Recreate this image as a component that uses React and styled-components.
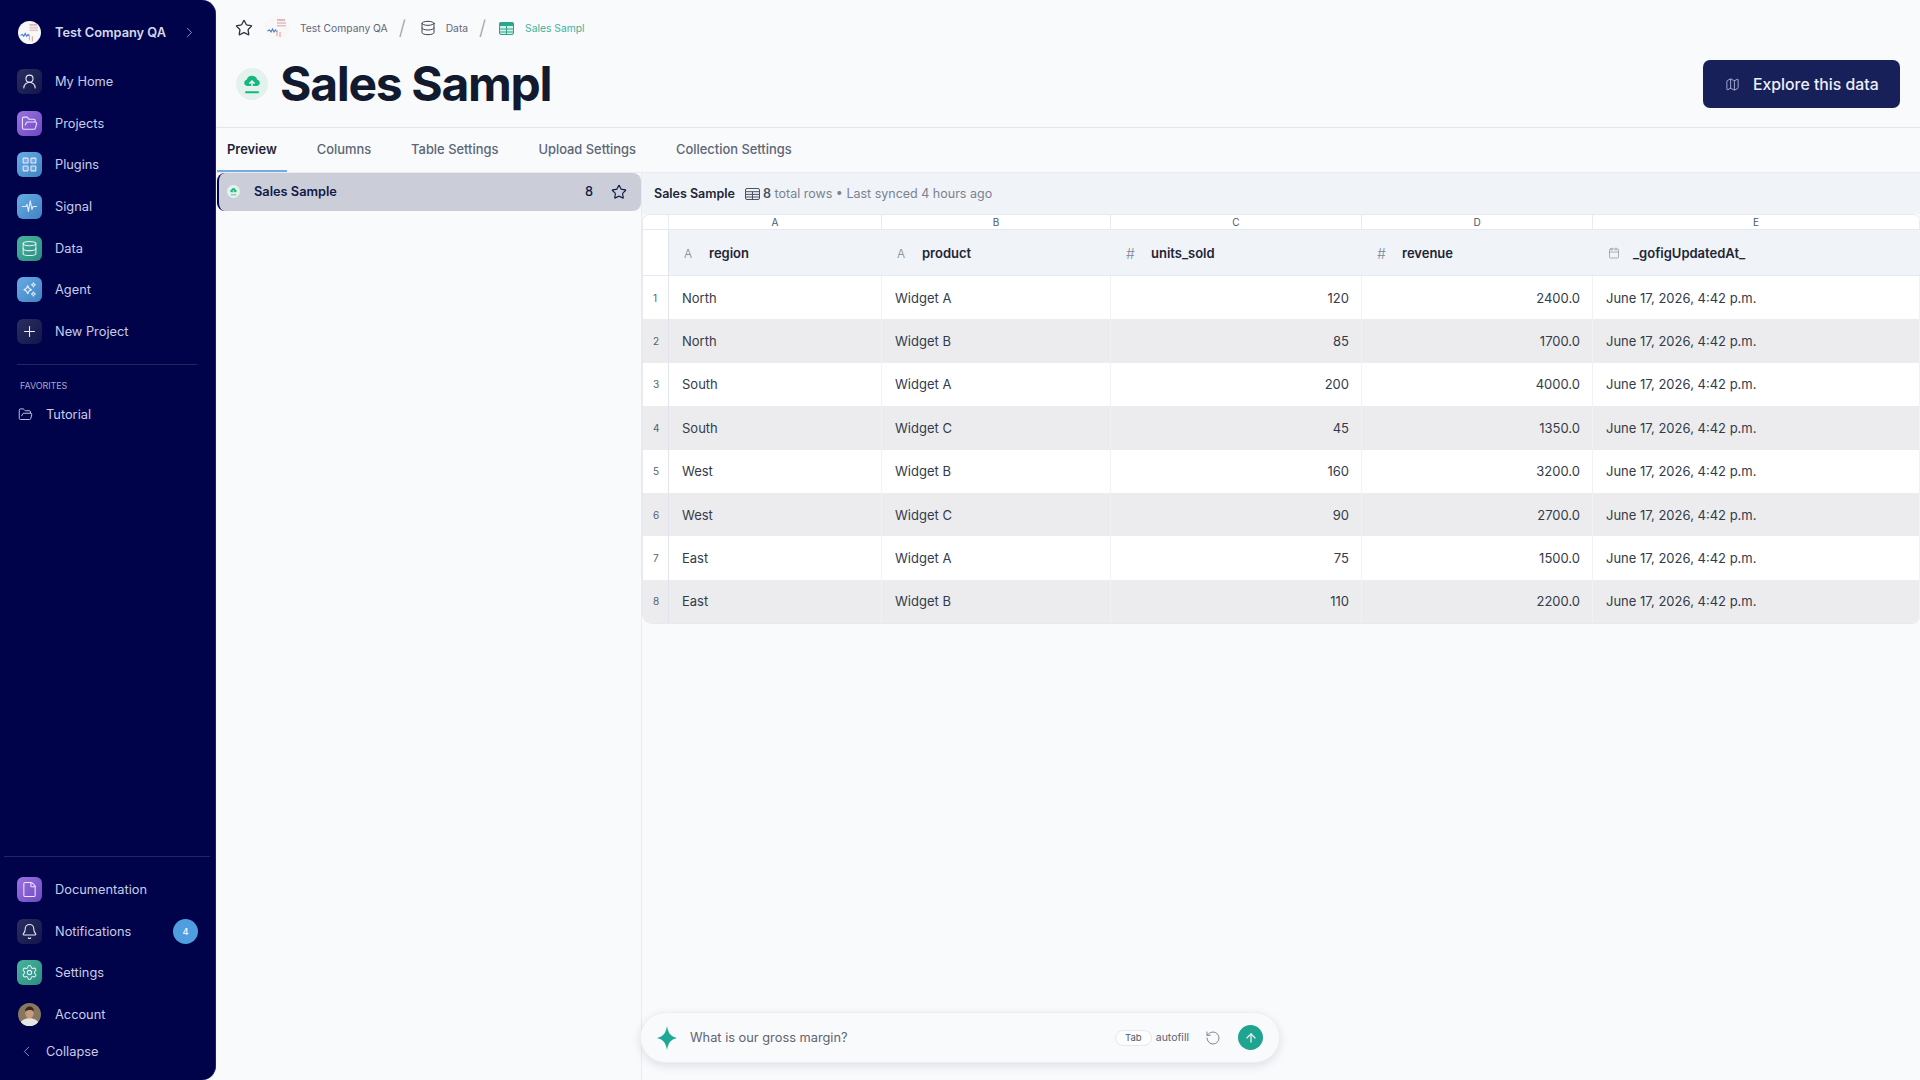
import styled, { createGlobalStyle } from "styled-components";
import {
  ArrowUp,
  Bell,
  Calendar,
  ChevronLeft,
  ChevronRight,
  Database,
  File,
  FolderOpen,
  LayoutGrid,
  Map,
  Plus,
  RotateCcw,
  Settings,
  Star,
  UserRound,
} from "lucide-react";

const GlobalStyle = createGlobalStyle`
  html, body {
    margin: 0;
    height: 100%;
    overflow: hidden;
    background: #f9fafc;
    font-family: Inter, "Noto Sans", sans-serif;
  }
  * { box-sizing: border-box; }
`;

const gradients = {
  dark: "linear-gradient(135deg, #2b2f5e, #12154a)",
  purple: "linear-gradient(135deg, #9a72e0, #6f48c2)",
  blue: "linear-gradient(135deg, #67ace4, #3f84c2)",
  green: "linear-gradient(135deg, #47b49b, #2b8d7f)",
};

const Page = styled.div`
  display: flex;
  width: 100%;
  height: 100vh;
  background: #f9fafc;
`;

/* sidebar */
const Sidebar = styled.aside`
  display: flex;
  flex-direction: column;
  flex: 0 0 216px;
  height: 100%;
  padding: 11px 0 12px;
  background: #01034a;
  border-right: 1px solid #1a2266;
  border-radius: 0 14px 14px 0;
  color: #c8cce8;
`;

const CompanyRow = styled.div`
  display: flex;
  align-items: center;
  height: 42px;
  margin-bottom: 8px;
  padding: 0 17px 0 18px;
  gap: 14px;
  font-size: 12.8px;
  font-weight: 600;
  color: #d5d8ee;
`;

const CompanyName = styled.span`
  flex: 1;
  white-space: nowrap;
`;

const NavItem = styled.div`
  display: flex;
  align-items: center;
  height: 41.6px;
  padding: 0 17px;
  gap: 13px;
  font-size: 12.8px;
`;

const NavLabel = styled.span`
  flex: 1;
`;

const NavIcon = styled.span`
  display: flex;
  align-items: center;
  justify-content: center;
  width: 25px;
  height: 25px;
  border-radius: 6px;
  background: ${(p) => gradients[p.$tone]};
  color: #e8eafb;
`;

const SideDivider = styled.div`
  height: 1px;
  margin: ${(p) => (p.$wide ? "0 5px 12px 4px" : "12px 18px 0 17px")};
  background: #23265f;
`;

const SectionLabel = styled.div`
  margin: 15px 0 0 20px;
  font-size: 9px;
  letter-spacing: -0.1px;
  color: #a3a8cc;
`;

const FavoriteItem = styled.div`
  display: flex;
  align-items: center;
  height: 34px;
  margin-top: 6px;
  padding: 0 18px;
  gap: 13px;
  font-size: 12.8px;
`;

const SideBottom = styled.div`
  margin-top: auto;
`;

const Badge = styled.span`
  display: flex;
  align-items: center;
  justify-content: center;
  width: 25px;
  height: 25px;
  border-radius: 50%;
  background: #4f9fe0;
  color: #e9f3fc;
  font-size: 9px;
  font-weight: 600;
`;

const CollapseRow = styled.div`
  display: flex;
  align-items: center;
  height: 33px;
  padding: 0 18px;
  gap: 11px;
  font-size: 12.8px;
`;

/* header */
const Main = styled.main`
  display: flex;
  flex-direction: column;
  flex: 1;
  min-width: 0;
  height: 100%;
`;

const Header = styled.header`
  flex: 0 0 128px;
  border-bottom: 1px solid #e3e6ec;
`;

const Breadcrumbs = styled.nav`
  display: flex;
  align-items: center;
  height: 56px;
  padding-left: 19px;
`;

const CrumbGroup = styled.span`
  display: flex;
  align-items: center;
  margin-left: ${(p) => p.$offset || 0}px;
  gap: ${(p) => p.$gap}px;
`;

const Crumb = styled.span`
  font-size: 10.3px;
  color: ${(p) => (p.$active ? "#3fb09a" : "#5f6878")};
  white-space: nowrap;
`;

const Slash = styled.span`
  margin: 0 14px 0 11px;
  font-size: 20px;
  font-weight: 300;
  color: #9aa1ad;
`;

const TitleRow = styled.div`
  display: flex;
  align-items: center;
  height: 56px;
  padding: 0 20px;
  gap: 13px;
`;

const Title = styled.h1`
  flex: 1;
  margin: 0 0 0 -1px;
  font-size: 48px;
  font-weight: 700;
  letter-spacing: -1.3px;
  line-height: 56px;
  color: #111a2e;
`;

const ExploreButton = styled.button`
  display: flex;
  align-items: center;
  width: 197px;
  height: 48px;
  padding: 0 0 0 22px;
  gap: 13px;
  border: 0;
  border-radius: 7px;
  background: #172058;
  color: #eceefa;
  font-family: inherit;
  font-size: 15.8px;
  font-weight: 500;
`;

const Tabs = styled.div`
  display: flex;
  flex: 0 0 44px;
  gap: 20px;
  padding-left: 1px;
  border-bottom: 1px solid #e8ebf0;
`;

const Tab = styled.div`
  display: flex;
  align-items: center;
  height: 44px;
  padding: 0 10px;
  font-size: 12.9px;
  font-weight: ${(p) => (p.$active ? 600 : 500)};
  color: ${(p) => (p.$active ? "#1d2536" : "#5c6677")};
  border-bottom: 2px solid ${(p) => (p.$active ? "#73acdf" : "transparent")};
`;

const Content = styled.div`
  display: flex;
  flex: 1;
  min-height: 0;
`;

const ListPanel = styled.div`
  flex: 0 0 426px;
  padding-left: 1px;
  border-right: 1px solid #e8ebf0;
`;

const ListItem = styled.div`
  display: flex;
  align-items: center;
  height: 37.5px;
  padding: 0 14px 0 8px;
  border-radius: 8px;
  border-left: 2px solid #01034a;
  background: #cbced9;
  color: #111a48;
  font-size: 12.8px;
  font-weight: 600;
`;

const ListName = styled.span`
  flex: 1;
  margin-left: 14px;
`;

const ListCount = styled.span`
  margin-right: 18px;
  font-weight: 500;
`;

/* table */
const DataPanel = styled.section`
  display: flex;
  flex-direction: column;
  flex: 1;
  min-width: 0;
`;

const Toolbar = styled.div`
  display: flex;
  align-items: center;
  flex: 0 0 41px;
  padding-left: 12px;
  gap: 10px;
  background: #f0f3f8;
  font-size: 12.5px;
  color: #7a8291;
`;

const ToolbarName = styled.strong`
  font-weight: 600;
  color: #1d2536;
`;

const RowCount = styled.span`
  display: flex;
  align-items: center;
  gap: 3px;
`;

const Strong = styled.b`
  font-weight: 600;
  color: #4a5262;
`;

const Table = styled.div`
  border: 1px solid #e6e9ef;
  border-width: 1px 0 1px 1px;
  border-radius: 8px 8px 8px 10px;
  overflow: hidden;
  background: #fff;
`;

const Row = styled.div`
  display: grid;
  grid-template-columns: 26px 213px 229px 251px 231px 1fr;
  height: ${(p) => p.$height}px;
  background: ${(p) => p.$bg || "#fff"};
  border-bottom: ${(p) => (p.$line ? "1px solid #e6e9ef" : "0")};
`;

const LetterCell = styled.div`
  display: flex;
  align-items: center;
  justify-content: center;
  border-right: 1px solid #e8ebf0;
  font-size: 10px;
  color: #4f5868;
`;

const HeadIndex = styled.div`
  background: #fff;
  border-right: 1px solid #e0e4ec;
`;

const HeadCell = styled.div`
  display: flex;
  align-items: center;
  padding: 1px 0 0 15px;
  font-size: 13px;
  font-weight: 600;
  color: #1d2536;
`;

const TypeIcon = styled.span`
  flex: 0 0 25px;
  display: flex;
  align-items: center;
  font-size: ${(p) => (p.$hash ? 14 : 12)}px;
  font-weight: 300;
  color: #7e8695;
`;

const IndexCell = styled.div`
  display: flex;
  align-items: center;
  padding-left: 10px;
  border-right: 1px solid #e0e4ec;
  font-size: 10px;
  color: #555e6e;
`;

const Cell = styled.div`
  display: flex;
  align-items: center;
  justify-content: ${(p) => (p.$num ? "flex-end" : "flex-start")};
  padding: 0 12px 0 13px;
  border-right: 1px solid #f1f2f5;
  font-size: 13px;
  color: #333b4b;
  white-space: nowrap;
`;

/* ask bar */
const AskBar = styled.div`
  display: flex;
  align-items: center;
  width: 640px;
  height: 51px;
  margin: auto 0 17px -2px;
  padding: 0 16px 0 15px;
  border-radius: 26px;
  background: #f9fafc;
  border: 1px solid #eceef2;
  box-shadow: 0 3px 10px rgba(30, 40, 70, 0.12);
`;

const AskText = styled.span`
  flex: 1;
  margin-left: 12px;
  font-size: 12.8px;
  color: #5c6473;
`;

const TabKey = styled.span`
  display: flex;
  align-items: center;
  justify-content: center;
  width: 37px;
  height: 16px;
  border: 1px solid #e6e8ed;
  border-radius: 8px;
  background: #fdfdfe;
  font-size: 9.5px;
  color: #4f5868;
`;

const Autofill = styled.span`
  margin: 0 16px 0 4px;
  font-size: 10.5px;
  color: #5c6473;
`;

const SendButton = styled.span`
  display: flex;
  align-items: center;
  justify-content: center;
  width: 25px;
  height: 25px;
  margin-left: 17px;
  border-radius: 50%;
  background: #1fa48f;
  color: #fff;
`;

const CompanyLogo = ({ size }) => (
  <svg width={size} height={size} viewBox="0 0 24 24">
    <circle cx="12" cy="12" r="12" fill="#f8f7f8" />
    <rect x="12" y="3" width="8" height="2" fill="#dbb9c0" />
    <rect x="12" y="6" width="9" height="2" fill="#e5c9cc" />
    <rect x="12" y="9" width="9" height="1.5" fill="#d9c2c9" />
    <path d="M2.5 15l2-1 1.500 2 1.500-3 1.500 3 1.500-2 1.500 2" fill="none" stroke="#4a79c9" strokeWidth="1.1" />
    <path d="M12 14v6M15 16v5" stroke="#e3a5a0" strokeWidth="1.2" />
  </svg>
);

const AccountAvatar = () => (
  <svg width="23" height="23" viewBox="0 0 24 24">
    <defs>
      <clipPath id="avatarClip">
        <circle cx="12" cy="12" r="12" />
      </clipPath>
    </defs>
    <g clipPath="url(#avatarClip)">
      <rect width="24" height="24" fill="#86785f" />
      <path d="M2 24c0-6 5-8 10-8s10 2 10 8z" fill="#e8e6e4" />
      <ellipse cx="12" cy="10.500" rx="4.400" ry="5.400" fill="#c79a7d" />
      <path d="M7.400 9c0-4 2.400-5.400 4.800-5.400S16.600 5 16.600 9c-1.400-2-6-2.400-9.200 0z" fill="#3a2a20" />
    </g>
  </svg>
);

const UploadBadge = ({ size }) => (
  <svg width={size} height={size} viewBox="0 0 32 32">
    <circle cx="16" cy="16" r="16" fill="#e4f2ee" />
    <path
      d="M11 18a3.200 3.200 0 0 1-.3-6.300 5.500 5.500 0 0 1 10.600 0 3.200 3.200 0 0 1-.3 6.300z"
      fill="#14b87f"
    />
    <path d="M16 20v-7m-2.600 2.600L16 13l2.600 2.600" fill="none" stroke="#e4f2ee" strokeWidth="1.500" />
    <rect x="9" y="23.200" width="14" height="2" rx="1" fill="#14b87f" />
  </svg>
);

const SignalIcon = () => (
  <svg width="17" height="17" viewBox="0 0 24 24" fill="none" stroke="currentColor" strokeWidth="1.600" strokeLinecap="round" strokeLinejoin="round">
    <path d="M2 12h5l1.500-3 2 10 2.500-15 2.500 12 1.500-4h5" />
  </svg>
);

const AgentIcon = () => (
  <svg width="17" height="17" viewBox="0 0 24 24" fill="none" stroke="currentColor" strokeWidth="1.500" strokeLinejoin="round">
    <path d="M9.500 6.500c.8 3.600 2 4.900 5.500 5.800-3.500.9-4.700 2.200-5.500 5.800-.8-3.600-2-4.900-5.500-5.800 3.500-.9 4.700-2.200 5.500-5.800z" />
    <path d="M17.500 2.500c.4 1.800 1 2.400 2.800 2.900-1.800.5-2.400 1.100-2.800 2.900-.4-1.800-1-2.400-2.800-2.900 1.800-.5 2.400-1.100 2.800-2.900z" />
    <path d="M17.500 15.500c.4 1.800 1 2.400 2.800 2.900-1.800.5-2.400 1.100-2.800 2.900-.4-1.800-1-2.400-2.800-2.900 1.800-.5 2.400-1.100 2.800-2.900z" />
  </svg>
);

const SheetIcon = () => (
  <svg width="15" height="13" viewBox="0 0 15 13">
    <rect x="0.500" y="0.500" width="14" height="12" rx="1.500" fill="#d7efe9" stroke="#2aa58e" />
    <rect x="0.500" y="0.500" width="14" height="3.500" fill="#2aa58e" />
    <path d="M0.500 7h14M0.500 10h14M7.500 4v8.500" stroke="#2aa58e" strokeWidth="1" />
  </svg>
);

const RowsIcon = () => (
  <svg width="15" height="12" viewBox="0 0 15 12" fill="none" stroke="#4a5262" strokeWidth="1">
    <rect x="0.500" y="0.500" width="14" height="11" rx="1.500" />
    <path d="M0.500 3.700h14M0.500 6.400h14M0.500 9h14M7.500 3.700v7.800" />
  </svg>
);

const SparkMark = () => (
  <svg width="22" height="26" viewBox="0 0 22 26">
    <path d="M11 1c1.200 7 3.400 10.400 10 12-6.600 1.600-8.800 5-10 12-1.200-7-3.400-10.400-10-12 6.600-1.600 8.800-5 10-12z" fill="#1fa896" />
  </svg>
);

const navTop = [
  ["My Home", "dark", <UserRound size={17} strokeWidth={1.5} />],
  ["Projects", "purple", <FolderOpen size={17} strokeWidth={1.5} />],
  ["Plugins", "blue", <LayoutGrid size={17} strokeWidth={1.5} fill="rgba(255,255,255,0.18)" />],
  ["Signal", "blue", <SignalIcon />],
  ["Data", "green", <Database size={17} strokeWidth={1.5} />],
  ["Agent", "blue", <AgentIcon />],
  ["New Project", "dark", <Plus size={17} strokeWidth={1.5} />],
];

const navBottom = [
  ["Documentation", "purple", <File size={17} strokeWidth={1.5} />],
  ["Notifications", "dark", <Bell size={17} strokeWidth={1.5} />, 4],
  ["Settings", "green", <Settings size={17} strokeWidth={1.5} />],
];

const tabs = ["Preview", "Columns", "Table Settings", "Upload Settings", "Collection Settings"];

const columns = [
  ["A", "region", "text"],
  ["B", "product", "text"],
  ["C", "units_sold", "num"],
  ["D", "revenue", "num"],
  ["E", "_gofigUpdatedAt_", "date"],
];

const rows = [
  ["North", "Widget A", 120, "2400.0"],
  ["North", "Widget B", 85, "1700.0"],
  ["South", "Widget A", 200, "4000.0"],
  ["South", "Widget C", 45, "1350.0"],
  ["West", "Widget B", 160, "3200.0"],
  ["West", "Widget C", 90, "2700.0"],
  ["East", "Widget A", 75, "1500.0"],
  ["East", "Widget B", 110, "2200.0"],
];

const renderNav = ([label, tone, icon, badge]) => (
  <NavItem key={label}>
    <NavIcon $tone={tone}>{icon}</NavIcon>
    <NavLabel>{label}</NavLabel>
    {badge && <Badge>{badge}</Badge>}
  </NavItem>
);

const App = () => {
  return (
    <Page>
      <GlobalStyle />
      <Sidebar>
        <CompanyRow>
          <CompanyLogo size={23} />
          <CompanyName>Test Company QA</CompanyName>
          <ChevronRight size={17} strokeWidth={1.25} color="#9da2c6" />
        </CompanyRow>
        {navTop.map(renderNav)}
        <SideDivider />
        <SectionLabel>FAVORITES</SectionLabel>
        <FavoriteItem>
          <FolderOpen size={15} strokeWidth={1.5} />
          Tutorial
        </FavoriteItem>
        <SideBottom>
          <SideDivider $wide />
          {navBottom.map(renderNav)}
          <NavItem>
            <NavIcon>
              <AccountAvatar />
            </NavIcon>
            <NavLabel>Account</NavLabel>
          </NavItem>
          <CollapseRow>
            <ChevronLeft size={17} strokeWidth={1.25} color="#9da2c6" />
            Collapse
          </CollapseRow>
        </SideBottom>
      </Sidebar>

      <Main>
        <Header>
          <Breadcrumbs>
            <Star size={18} strokeWidth={1.75} color="#2c3444" />
            <CrumbGroup $offset={12} $gap={11}>
              <CompanyLogo size={24} />
              <Crumb>Test Company QA</Crumb>
            </CrumbGroup>
            <Slash>/</Slash>
            <CrumbGroup $gap={10}>
              <Database size={16} strokeWidth={1.5} color="#3b4354" />
              <Crumb>Data</Crumb>
            </CrumbGroup>
            <Slash>/</Slash>
            <CrumbGroup $offset={-1} $gap={11}>
              <SheetIcon />
              <Crumb $active>Sales Sampl</Crumb>
            </CrumbGroup>
          </Breadcrumbs>
          <TitleRow>
            <UploadBadge size={32} />
            <Title>Sales Sampl</Title>
            <ExploreButton>
              <Map size={15} strokeWidth={1.5} color="#aab1d8" />
              Explore this data
            </ExploreButton>
          </TitleRow>
        </Header>

        <Tabs>
          {tabs.map((tab, i) => (
            <Tab key={tab} $active={i === 0}>
              {tab}
            </Tab>
          ))}
        </Tabs>

        <Content>
          <ListPanel>
            <ListItem>
              <UploadBadge size={13} />
              <ListName>Sales Sample</ListName>
              <ListCount>8</ListCount>
              <Star size={16} strokeWidth={1.75} color="#111a48" />
            </ListItem>
          </ListPanel>

          <DataPanel>
            <Toolbar>
              <ToolbarName>Sales Sample</ToolbarName>
              <RowCount>
                <RowsIcon />
                <span>
                  <Strong>8</Strong> total rows • Last synced 4 hours ago
                </span>
              </RowCount>
            </Toolbar>
            <Table>
              <Row $height={15} $line>
                <LetterCell />
                {columns.map(([letter]) => (
                  <LetterCell key={letter}>{letter}</LetterCell>
                ))}
              </Row>
              <Row $height={46} $bg="#f0f3f8" $line>
                <HeadIndex />
                {columns.map(([letter, name, type]) => (
                  <HeadCell key={letter}>
                    <TypeIcon $hash={type === "num"}>
                      {type === "text" && "A"}
                      {type === "num" && "#"}
                      {type === "date" && <Calendar size={12} strokeWidth={1.25} />}
                    </TypeIcon>
                    {name}
                  </HeadCell>
                ))}
              </Row>
              {rows.map((row, i) => (
                <Row key={i} $height={43.375} $bg={i % 2 ? "#ececee" : "#fff"}>
                  <IndexCell>{i + 1}</IndexCell>
                  <Cell>{row[0]}</Cell>
                  <Cell>{row[1]}</Cell>
                  <Cell $num>{row[2]}</Cell>
                  <Cell $num>{row[3]}</Cell>
                  <Cell>June 17, 2026, 4:42 p.m.</Cell>
                </Row>
              ))}
            </Table>
            <AskBar>
              <SparkMark />
              <AskText>What is our gross margin?</AskText>
              <TabKey>Tab</TabKey>
              <Autofill>autofill</Autofill>
              <RotateCcw size={16} strokeWidth={1.5} color="#7e8695" />
              <SendButton>
                <ArrowUp size={14} strokeWidth={2} />
              </SendButton>
            </AskBar>
          </DataPanel>
        </Content>
      </Main>
    </Page>
  );
};

export default App;
